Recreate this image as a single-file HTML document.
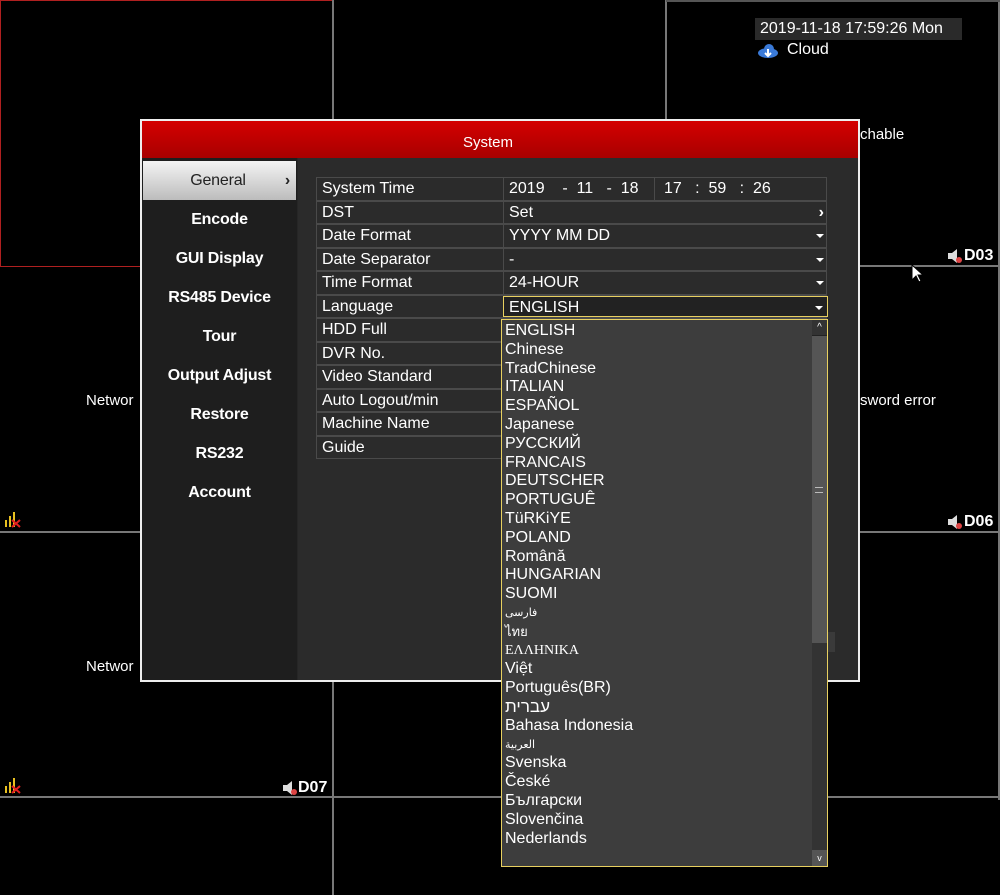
<!DOCTYPE html>
<html><head><meta charset="utf-8"><style>
*{margin:0;padding:0;box-sizing:border-box}
body{width:1000px;height:895px;background:#000;position:relative;overflow:hidden;font-family:"Liberation Sans","DejaVu Sans",sans-serif;color:#fff}
.a{position:absolute}
.hl{position:absolute;height:2px;background:#8a8a8a}
.vl{position:absolute;width:2px;background:#8a8a8a}
.t{position:absolute;font-size:15px;white-space:nowrap}
.menu div{position:absolute;left:0;width:153px;text-align:center;font-weight:bold;font-size:16px;color:#fff;letter-spacing:-0.2px}
.row{position:absolute;left:316px;width:511px;height:23.5px;border:1px solid #4a4a4a;font-size:16px}
.row .l{position:absolute;left:5px;top:2px}
.row .v{position:absolute;left:186px;top:0;width:325px;height:100%;border-left:1px solid #4a4a4a}
.row .v span{position:absolute;left:5px;top:2px}
.arr{position:absolute;right:4px;top:9px;width:0;height:0;border-left:4px solid transparent;border-right:4px solid transparent;border-top:4px solid #fff}
.list div{height:18.8px;font-size:16px;line-height:18px;padding-left:3px}
</style></head><body>
<div class="a" style="left:0;top:0;width:334px;height:267px;border:1px solid #b02020"></div>
<div class="vl" style="left:332px;top:0;height:895px;background:#777"></div>
<div class="vl" style="left:665px;top:0;height:800px;background:#777"></div>
<div class="hl" style="left:334px;top:265px;width:666px;background:#777"></div>
<div class="hl" style="left:0;top:531px;width:1000px;background:#777"></div>
<div class="hl" style="left:0;top:796px;width:1000px;background:#777"></div>
<div class="vl" style="left:998px;top:0;height:800px;background:#777"></div>
<div class="hl" style="left:666px;top:0;width:334px;background:#555"></div>

<div class="a" style="left:755px;top:18px;width:207px;height:22px;background:#2a2a2a"></div>
<div class="t" style="left:760px;top:19px;font-size:16px;line-height:20px">2019-11-18 17:59:26 Mon</div>
<svg class="a" style="left:757px;top:43px" width="22" height="16"><ellipse cx="11" cy="10" rx="10" ry="5" fill="#3a7ad8"/><circle cx="12" cy="6" r="5" fill="#3a7ad8"/><path d="M11 6v7M8 10l3 3 3-3" stroke="#fff" stroke-width="2" fill="none"/></svg>
<div class="t" style="left:787px;top:41px;font-size:16px">Cloud</div>
<div class="t" style="left:860px;top:126px">chable</div>
<div class="t" style="left:860px;top:392px">sword error</div>
<div class="t" style="left:86px;top:392px">Networ</div>
<div class="t" style="left:86px;top:658px">Networ</div>
<div class="t" style="left:964px;top:247px;font-weight:bold;font-size:16px">D03</div>
<div class="t" style="left:964px;top:513px;font-weight:bold;font-size:16px">D06</div>
<div class="t" style="left:298px;top:779px;font-weight:bold;font-size:16px">D07</div>
<svg class="a" style="left:947px;top:249px" width="16" height="14"><path d="M1 4h4l5-4v14l-5-4H1z" fill="#ddd"/><circle cx="12" cy="11" r="3" fill="#d44"/></svg>
<svg class="a" style="left:947px;top:515px" width="16" height="14"><path d="M1 4h4l5-4v14l-5-4H1z" fill="#ddd"/><circle cx="12" cy="11" r="3" fill="#d44"/></svg>
<svg class="a" style="left:282px;top:781px" width="16" height="14"><path d="M1 4h4l5-4v14l-5-4H1z" fill="#ddd"/><circle cx="12" cy="11" r="3" fill="#d44"/></svg>
<svg class="a" style="left:4px;top:512px" width="18" height="16"><rect x="1" y="8" width="2" height="7" fill="#e8c020"/><rect x="5" y="4" width="2" height="11" fill="#e8c020"/><rect x="9" y="0" width="2" height="15" fill="#e8c020"/><path d="M8 8l8 7M16 8l-8 7" stroke="#e02020" stroke-width="2"/></svg>
<svg class="a" style="left:4px;top:778px" width="18" height="16"><rect x="1" y="8" width="2" height="7" fill="#e8c020"/><rect x="5" y="4" width="2" height="11" fill="#e8c020"/><rect x="9" y="0" width="2" height="15" fill="#e8c020"/><path d="M8 8l8 7M16 8l-8 7" stroke="#e02020" stroke-width="2"/></svg>
<svg class="a" style="left:911px;top:264px" width="14" height="20"><path d="M1 1v15l4-4 3 6 2-1-3-6h5z" fill="#fff" stroke="#000"/></svg>

<div class="a" style="left:140px;top:119px;width:720px;height:563px;border:2px solid #eee;background:#262626"></div>
<div class="a" style="left:142px;top:121px;width:716px;height:37px;background:linear-gradient(#d40000,#a80000)"></div>
<div class="t" style="left:463px;top:134px;font-size:15px">System</div>
<div class="a" style="left:142px;top:158px;width:155px;height:522px;background:#1e1e1e"></div>
<div class="a" style="left:143px;top:161px;width:153px;height:39px;background:linear-gradient(#f4f4f4,#bcbcbc)"></div>
<div class="menu a" style="left:143px;top:1px">
<div style="top:171px;font-weight:normal;color:#222;width:150px">General<span style="position:absolute;right:3px;font-weight:bold">›</span></div>
<div style="top:210px">Encode</div>
<div style="top:249px">GUI Display</div>
<div style="top:288px">RS485 Device</div>
<div style="top:327px">Tour</div>
<div style="top:366px">Output Adjust</div>
<div style="top:405px">Restore</div>
<div style="top:444px">RS232</div>
<div style="top:483px">Account</div>
</div>
<div class="a" style="left:298px;top:158px;width:560px;height:522px;background:#2b2b2b"></div>

<div class="row" style="top:177px"><span class="l">System Time</span><div class="v"><span>2019&nbsp;&nbsp;&nbsp;&nbsp;-&nbsp;&nbsp;11&nbsp;&nbsp;&nbsp;-&nbsp;&nbsp;18</span><span style="left:150px;width:1px;height:22px;top:0;background:#4a4a4a"></span><span style="left:160px">17&nbsp;&nbsp;&nbsp;:&nbsp;&nbsp;59&nbsp;&nbsp;&nbsp;:&nbsp;&nbsp;26</span></div></div>
<div class="row" style="top:200.5px"><span class="l">DST</span><div class="v"><span>Set</span><span style="left:auto;right:4px;font-weight:bold">›</span></div></div>
<div class="row" style="top:224px"><span class="l">Date Format</span><div class="v"><span>YYYY MM DD</span><i class="arr"></i></div></div>
<div class="row" style="top:247.5px"><span class="l">Date Separator</span><div class="v"><span>-</span><i class="arr"></i></div></div>
<div class="row" style="top:271px"><span class="l">Time Format</span><div class="v"><span>24-HOUR</span><i class="arr"></i></div></div>
<div class="row" style="top:294.5px"><span class="l">Language</span><div class="v" style="border:1px solid #e8d060;background:#222"><span>ENGLISH</span><i class="arr"></i></div></div>
<div class="row" style="top:318px"><span class="l">HDD Full</span></div>
<div class="row" style="top:341.5px"><span class="l">DVR No.</span></div>
<div class="row" style="top:365px"><span class="l">Video Standard</span></div>
<div class="row" style="top:388.5px"><span class="l">Auto Logout/min</span></div>
<div class="row" style="top:412px"><span class="l">Machine Name</span></div>
<div class="row" style="top:435.5px"><span class="l">Guide</span></div>
<div class="a" style="left:825px;top:632px;width:10px;height:20px;background:#3a3a3a"></div>

<div class="a list" style="left:501px;top:319px;width:327px;height:548px;border:1px solid #e8d060;background:#3d3d3d;padding-top:2px">
<div>ENGLISH</div><div>Chinese</div><div>TradChinese</div><div>ITALIAN</div><div>ESPAÑOL</div><div>Japanese</div><div>РУССКИЙ</div><div>FRANCAIS</div><div>DEUTSCHER</div><div>PORTUGUÊ</div><div>TüRKiYE</div><div>POLAND</div><div>Română</div><div>HUNGARIAN</div><div>SUOMI</div><div style="font-size:11px">فارسی</div><div style="font-size:13px;font-family:'Liberation Serif',serif">ไทย</div><div style="font-family:'Liberation Serif',serif;font-size:14px">ΕΛΛΗΝΙΚΑ</div><div>Việt</div><div>Português(BR)</div><div style="font-size:17px">עברית</div><div>Bahasa Indonesia</div><div style="font-size:11px">العربية</div><div>Svenska</div><div>České</div><div>Български</div><div>Slovenčina</div><div>Nederlands</div>
<div class="a" style="left:310px;top:0;width:15px;height:546px;background:#333"></div>
<div class="a" style="left:310px;top:16px;width:15px;height:307px;background:#555"></div>
<div class="a" style="left:310px;top:0;width:15px;height:16px;font-size:10px;text-align:center;line-height:16px;padding:0;border-bottom:1px solid #222">^</div>
<div class="a" style="left:310px;top:530px;width:15px;height:16px;font-size:9px;text-align:center;line-height:16px;padding:0;background:#555">v</div>
<div class="a" style="left:313px;top:167px;width:8px;height:6px;border-top:1px solid #bbb;border-bottom:1px solid #bbb;padding:0"></div>
</div>
</body></html>
